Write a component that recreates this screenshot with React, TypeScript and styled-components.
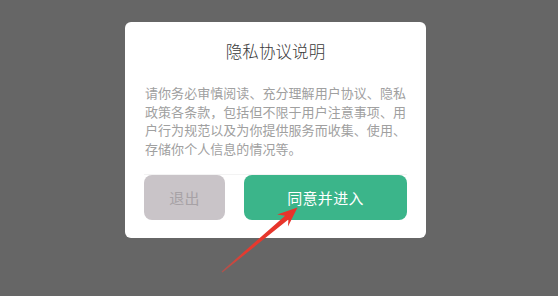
import styled, { createGlobalStyle } from 'styled-components';

const GlobalStyle = createGlobalStyle`
  html, body {
    margin: 0;
    padding: 0;
    background: #666666;
  }
  body {
    font-family: "Noto Sans CJK SC", "Noto Sans", sans-serif;
  }
`;

const Screen = styled.div`
  position: relative;
  width: 558px;
  height: 296px;
  overflow: hidden;
  background: #666666;
  padding: 22px 0 0 125px;
  box-sizing: border-box;
`;

const Dialog = styled.div`
  width: 301px;
  box-sizing: border-box;
  padding: 18px 19px 18px 19px;
  background: #ffffff;
  border-radius: 6px;
  display: flex;
  flex-direction: column;
`;

const Title = styled.div`
  font-size: 16.5px;
  font-weight: 300;
  line-height: 22px;
  letter-spacing: 0.1px;
  color: #3a3a3a;
  text-align: center;
`;

const Body = styled.p`
  margin: 22px 0 0;
  padding-left: 1px;
  font-size: 13px;
  line-height: 18.5px;
  letter-spacing: 0.05px;
  color: #a0a0a0;
`;

const Actions = styled.div`
  margin-top: 16px;
  border-top: 1px solid #f3f3f3;
  display: flex;
  gap: 19px;
`;

const Button = styled.button<{ $primary?: boolean }>`
  flex: ${(p) => (p.$primary ? '163 1 0' : '81 1 0')};
  min-width: 0;
  height: 45px;
  padding: 0;
  border: none;
  border-radius: 8px;
  font-family: inherit;
  font-size: 15px;
  letter-spacing: 0.3px;
  background: ${(p) => (p.$primary ? '#3bb58a' : '#c9c4c8')};
  color: ${(p) => (p.$primary ? '#ffffff' : '#a7a2a6')};
  cursor: pointer;
`;

const Arrow = styled.svg`
  position: absolute;
  left: 0;
  top: 0;
  pointer-events: none;
`;

export default function App() {
  return (
    <>
      <GlobalStyle />
      <Screen>
        <Dialog>
          <Title>隐私协议说明</Title>
          <Body>
            请你务必审慎阅读、充分理解用户协议、隐私政策各条款，包括但不限于用户注意事项、用户行为规范以及为你提供服务而收集、使用、存储你个人信息的情况等。
          </Body>
          <Actions>
            <Button>退出</Button>
            <Button $primary>同意并进入</Button>
          </Actions>
        </Dialog>
        <Arrow width="558" height="296" viewBox="0 0 558 296">
          <defs>
            <linearGradient id="arrowFade" x1="222" y1="272" x2="297" y2="208" gradientUnits="userSpaceOnUse">
              <stop offset="0" stopColor="#e5443a" stopOpacity="0.55" />
              <stop offset="0.3" stopColor="#e63a2e" />
              <stop offset="1" stopColor="#e8322a" />
            </linearGradient>
          </defs>
          <polygon
            points="222.4,272.5 288.4,219.5 288.0,226.6 297.5,207.5 277.2,214.6 285.1,215.7 221.6,271.5"
            fill="url(#arrowFade)"
          />
        </Arrow>
      </Screen>
    </>
  );
}
